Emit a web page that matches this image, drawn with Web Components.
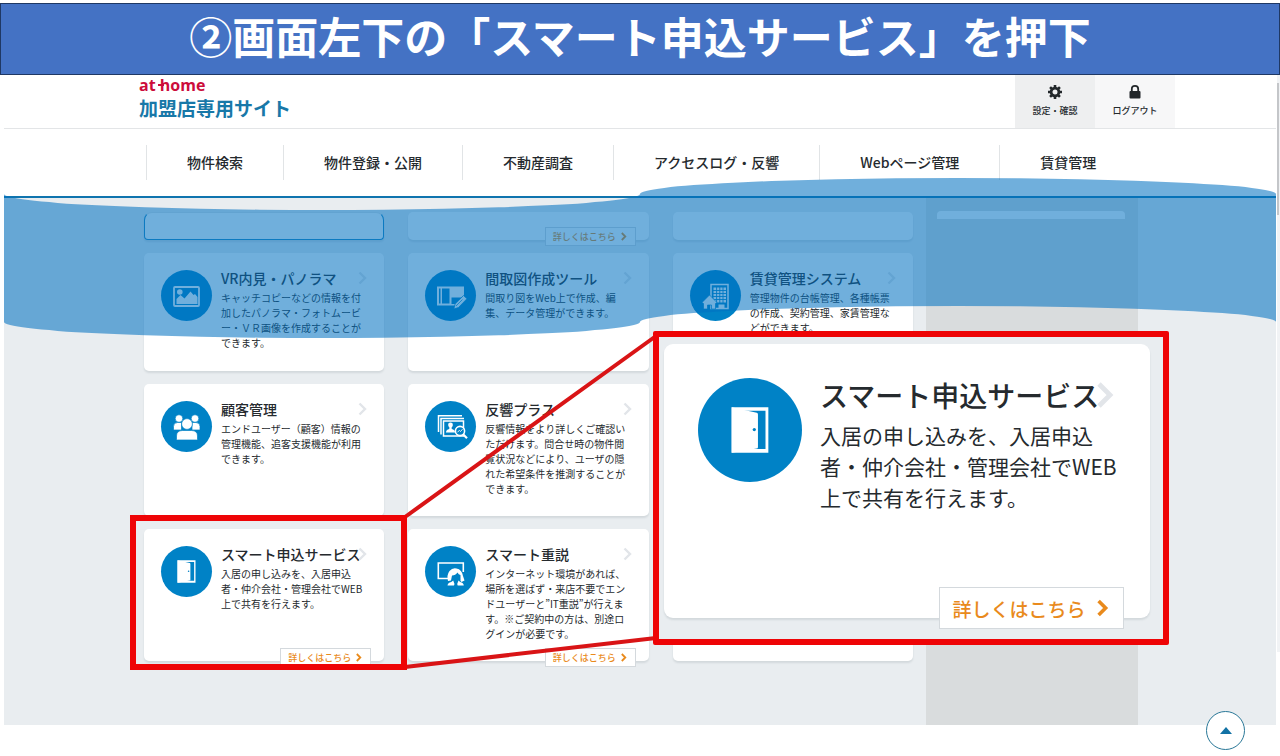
<!DOCTYPE html>
<html lang="ja">
<head>
<meta charset="utf-8">
<meta name="viewport" content="width=device-width, initial-scale=1">
<title>加盟店専用サイト</title>
<style>
  body { margin: 0; background: #fff; color: #252a2e; font-family: "Noto Sans CJK JP", "Noto Sans", sans-serif; }
</style>
</head>
<body>
<guide-page></guide-page>
<script>
const ICONS = {
  image: `<rect x="13" y="17" width="25" height="19" rx="1" fill="none" stroke="#fff" stroke-width="1.800"/>
    <circle cx="18.8" cy="22" r="2.8" fill="#fff"/>
    <path d="M15.500 34v-5l4-4 4 3.500 6-7 3 3.500 1.500-1 2.500 3v7z" fill="#fff"/>`,
  plan: `<path d="M12 16.500h27v10l-8 9H12z" fill="#fff"/>
    <path d="M14 18.500h1.500v15H14zM17 18.500h7.500v15H17zM26.500 27.500h11L30 34h-3.500z" fill="#0082c6"/>
    <path d="M38.500 25.500l3.500 3.200-8.500 8.800-4.700 1.500 1.300-5z" fill="#fff" stroke="#0082c6" stroke-width=".8"/>
    <path d="M31 36l6.500-6.500" stroke="#0082c6" stroke-width=".7"/>`,
  building: `<path d="M21 14.500h17v24H21z" fill="none" stroke="#fff" stroke-width="1.500"/>
    <path d="M23.500 17.500h12.500v15H23.500z" fill="#fff"/>
    <path d="M26.600 17v16M29.800 17v16M33 17v16M23 20.500h13.500M23 23.500h13.500M23 26.500h13.500M23 29.500h13.500" stroke="#0082c6" stroke-width=".9"/>
    <path d="M12 32.500l7.500-7.500 7.500 7.500-1.500 1v5.500h-4v-4h-4v4h-4v-5.500z" fill="#fff" stroke="#0082c6" stroke-width=".7"/>
    <path d="M28.500 34.500h6V39h-6z" fill="#fff"/>`,
  people: `<g fill="#fff" stroke="#0082c6" stroke-width=".7">
    <circle cx="18" cy="17.500" r="3.800"/><circle cx="34" cy="17.500" r="3.800"/>
    <path d="M12.500 29v-3.500q0-4 4-4h4v7.500zM39 29v-3.500q0-4-4-4h-4v7.500z"/>
    <path d="M15.500 38.500v-3.500q0-5.500 6-5.500h9q6 0 6 5.500v3.500q0 .5-1 .5h-19q-1 0-1-.5z"/>
    <circle cx="26" cy="23" r="5.400"/></g>`,
  search: `<g fill="none" stroke="#fff" stroke-width="1.500"><path d="M13.500 31V14.800H37M16 33.500V17.500H39"/>
    <path d="M18.500 20h20v15h-20z"/></g><circle cx="25.500" cy="24" r="2.400" fill="#fff"/>
    <path d="M21 31.500q0-3 3.300-3.600V26h2.400v1.900q3.300.6 3.300 3.600z" fill="#fff"/>
    <circle cx="35" cy="30" r="4.600" fill="#0082c6" stroke="#fff" stroke-width="1.600"/>
    <path d="M38.300 33.500l3.700 3.700" stroke="#fff" stroke-width="2.200"/>
    <path d="M32.500 31l2-1.500 1 1 2-2.300" stroke="#fff" stroke-width=".9" fill="none"/>`,
  door: `<path d="M16.500 14.300h18v22.400h-18z" fill="#fff"/>
    <path d="M21 16h12.100v18.800H20.500z" fill="#0082c6"/>
    <path d="M16.500 14.300l12.300 2.800q.6.200.6.800v16q0 .6-.6.700l-12.300 2.100z" fill="#fff"/>
    <circle cx="27.600" cy="25.300" r=".8" fill="#0082c6"/>`,
  lesson: `<path d="M23 32.500H13.300V17h25v9" fill="none" stroke="#fff" stroke-width="1.600"/>
    <path d="M23 35q-1.500-6 1.500-10 3-3.500 7-2.500 5.500 1 6.500 7.500l1.500 4.500-3 1.500-1-1V29q-2-.5-3-2.500-2 3-5.500 3l-1 5z" fill="#fff"/>
    <path d="M22.500 39.500q.3-3 3.700-3.500l2-1.500 1.300 3.500-.5 1.500zM38.800 39.500q-.3-3-3.600-3.500l-1.700-1.500-1.300 3.500.5 1.500z" fill="#fff"/>`
};

function define(name, html, setup) {
  const tpl = document.createElement("template");
  tpl.innerHTML = html;
  customElements.define(name, class extends HTMLElement {
    constructor() {
      super();
      this.attachShadow({ mode: "open" }).append(tpl.content.cloneNode(true));
    }
    connectedCallback() { if (setup) setup(this, this.shadowRoot); }
  });
}

define("guide-banner", `
  <style>
    :host { display: block; background: #4472c4; border: 1px solid #1f3864; color: #fff; padding-bottom: 8px; }
    h1 { margin: 0; font-size: 43px; line-height: 62px; font-weight: 700; text-align: center; white-space: nowrap; }
  </style>
  <h1><slot></slot></h1>`);

define("header-button", `
  <style>
    :host { display: flex; width: 80px; background: #f7f7f8; }
    :host([active]) { background: #eeeff0; }
    button { flex: 1; display: flex; flex-direction: column; align-items: center; gap: 4px; border: 0; padding: 9px 0 0;
      background: none; font: 500 9px/14px "Noto Sans CJK JP", sans-serif; color: #252a2e; }
    ::slotted(svg) { width: 16px; height: 16px; }
  </style>
  <button type="button"><slot name="icon"></slot><span><slot></slot></span></button>`);

define("site-header", `
  <style>
    :host { display: flex; justify-content: space-between; height: 53px; padding: 0 101px 0 135px; border-bottom: 1px solid #e3e5e7; background: #fff; }
    a { text-decoration: none; color: #1878a8; display: block; }
    .logo { display: block; color: #cc0c3b; font: 700 16px/20px "Open Sans", sans-serif; white-space: nowrap; }
    .logo span { position: relative; }
    .logo span::before { content: ""; position: absolute; left: -2px; top: 10px; width: 6px; height: 2px; background: currentColor; }
    .name { display: block; font-size: 19px; line-height: 26px; font-weight: 700; }
    .tools { display: flex; }
  </style>
  <a href="#"><span class="logo">at <span>home</span></span><span class="name">加盟店専用サイト</span></a>
  <div class="tools">
    <header-button active><svg slot="icon" viewBox="0 0 16 16"><g fill="#22272a"><path d="M6.700 1h2.600v3H6.700zM6.700 12h2.600v3H6.700zM1 6.700h3v2.600H1zM12 6.700h3v2.600h-3z"/><path d="M6.700 1h2.600v3H6.700zM6.700 12h2.600v3H6.700zM1 6.700h3v2.600H1zM12 6.700h3v2.600h-3z" transform="rotate(45 8 8)"/></g><circle cx="8" cy="8" r="3.900" fill="none" stroke="#22272a" stroke-width="2.800"/></svg>設定・確認</header-button>
    <header-button><svg slot="icon" viewBox="0 0 16 16"><rect x="2.500" y="7" width="11" height="7.500" rx="1" fill="#22272a"/><path d="M4.800 7.500V5q0-3.200 3.200-3.200T11.200 5v2.500" fill="none" stroke="#22272a" stroke-width="1.800"/></svg>ログアウト</header-button>
  </div>`);

define("site-nav", `
  <style>
    :host { display: block; background: #fff; border-bottom: 2px solid #0f74ae; padding: 16px 0 16px 142px; }
    nav { display: flex; }
    a { border-left: 1px solid #e1e4e6; padding: 0 40px; font-size: 14px; line-height: 35px; font-weight: 500; color: #252a2e; text-decoration: none; white-space: nowrap; }
  </style>
  <nav><a href="#">物件検索</a><a href="#">物件登録・公開</a><a href="#">不動産調査</a><a href="#">アクセスログ・反響</a><a href="#">Webページ管理</a><a href="#">賃貸管理</a></nav>`);

define("feature-card", `
  <style>
    :host { --disc: 51px; --pad: 17px; --gap: 9px; --title: 14px; --title-line: 20px; --text: 10px; --text-line: 15px; --lift: -2px; --space: 2px;
      --tag: 9px; --tag-w: 91px; --tag-h: 19px; --tag-right: 13px; --tag-drop: -6px; --chev: 14px; --chev-top: 18px; --chev-right: 15px; --tag-gap: 3px; --chev-s: 9px;
      display: block; position: relative; box-sizing: border-box; background: #fff; border-radius: 5px; box-shadow: 0 2px 2px rgba(60,70,80,.12); }
    :host([large]) { --disc: 104px; --pad: 34px; --gap: 18px; --title: 28px; --title-line: 40px; --text: 21px; --text-line: 31px; --lift: -3px; --space: 5px;
      --tag: 19px; --tag-w: 185px; --tag-h: 42px; --tag-right: 26px; --tag-drop: -11px; --chev: 28px; --chev-top: 37px; --chev-right: 32px; --tag-gap: 7px; --chev-s: 18px; border-radius: 9px; }
    :host([outlined]) { border: 1px solid #1c86c2; border-top-color: #dfe3e6; border-radius: 8px 8px 4px 4px; }
    .body { display: flex; gap: var(--gap); padding: var(--pad) 0 0 var(--pad); }
    .disc { flex: none; width: var(--disc); height: var(--disc); border-radius: 50%; background: #0082c6; display: block; }
    h2 { margin: var(--lift) 0 0; font-size: var(--title); line-height: var(--title-line); font-weight: 500; white-space: nowrap; }
    p { margin: var(--space) 0 0; font-size: var(--text); line-height: var(--text-line); white-space: nowrap; }
    .chev { position: absolute; top: var(--chev-top); right: var(--chev-right); width: var(--chev); height: var(--chev); }
    .more { position: absolute; box-sizing: border-box; right: var(--tag-right); bottom: var(--tag-drop); width: var(--tag-w); height: var(--tag-h);
      display: flex; align-items: center; justify-content: center; gap: var(--tag-gap); background: #fff; border: 1px solid #d4d9dd;
      color: #e98a1c; font-size: var(--tag); font-weight: 500; text-decoration: none; white-space: nowrap; }
    .more svg { width: var(--chev-s); height: var(--chev-s); }
    [hidden] { display: none; }
  </style>
  <div class="body"><svg class="disc" viewBox="0 0 51 51" aria-hidden="true"></svg><div><h2><slot name="title"></slot></h2><p><slot></slot></p></div></div>
  <svg class="chev" viewBox="0 0 14 14"><path d="M4.500 1.500L10 7l-5.500 5.500" fill="none" stroke="#e2e5e9" stroke-width="2.400"/></svg>
  <a class="more" href="#">詳しくはこちら<svg viewBox="0 0 9 9"><path d="M2.800 1L6.300 4.500 2.800 8" fill="none" stroke="#e98a1c" stroke-width="1.800"/></svg></a>`,
  (el, root) => {
    const icon = el.getAttribute("icon");
    root.querySelector(".disc").innerHTML = ICONS[icon] || "";
    root.querySelector(".body").hidden = !icon;
    root.querySelector(".chev").toggleAttribute("hidden", !icon);
    root.querySelector(".more").hidden = !el.hasAttribute("more");
  });

define("service-board", `
  <style>
    :host { display: flex; gap: 13px; background: #e9edf0; padding: 0 138px 0 140px; }
    .grid { flex: 1; display: grid; grid-template-columns: repeat(3, 1fr); grid-template-rows: 28px 118px 132px 132px; column-gap: 24px; row-gap: 13px; padding: 14px 0 64px; }
    aside { width: 212px; background: #d9dcdd; padding: 13px 13px 0 11px; box-sizing: border-box; }
    aside div { height: 8px; background: #fff; border-radius: 4px 4px 0 0; }
  </style>
  <div class="grid">
    <feature-card outlined></feature-card>
    <feature-card more></feature-card>
    <feature-card></feature-card>
    <feature-card icon="image"><span slot="title">VR内見・パノラマ</span>キャッチコピーなどの情報を付<br>加したパノラマ・フォトムービ<br>ー・ＶＲ画像を作成することが<br>できます。</feature-card>
    <feature-card icon="plan"><span slot="title">間取図作成ツール</span>間取り図をWeb上で作成、編<br>集、データ管理ができます。</feature-card>
    <feature-card icon="building"><span slot="title">賃貸管理システム</span>管理物件の台帳管理、各種帳票<br>の作成、契約管理、家賃管理な<br>どができます。</feature-card>
    <feature-card icon="people"><span slot="title">顧客管理</span>エンドユーザー（顧客）情報の<br>管理機能、追客支援機能が利用<br>できます。</feature-card>
    <feature-card icon="search"><span slot="title">反響プラス</span>反響情報をより詳しくご確認い<br>ただけます。問合せ時の物件閲<br>覧状況などにより、ユーザの隠<br>れた希望条件を推測することが<br>できます。</feature-card>
    <feature-card></feature-card>
    <feature-card icon="door" more><span slot="title">スマート申込サービス</span>入居の申し込みを、入居申込<br>者・仲介会社・管理会社でWEB<br>上で共有を行えます。</feature-card>
    <feature-card icon="lesson" more><span slot="title">スマート重説</span>インターネット環境があれば、<br>場所を選ばず・来店不要でエン<br>ドユーザーと”IT重説”が行えま<br>す。※ご契約中の方は、別途ロ<br>グインが必要です。</feature-card>
    <feature-card></feature-card>
  </div>
  <aside><div></div></aside>`);

define("wave-band", `
  <style>
    :host { display: block; position: absolute; left: 4px; right: 4px; top: 178px; height: 160px; pointer-events: none; }
    svg { display: block; width: 100%; height: 100%; }
  </style>
  <svg viewBox="0 0 1272 160" preserveAspectRatio="none"><path d="M0 16A318 16 0 0 0 636 16A318 16 0 0 1 1272 16V144A318 16 0 0 0 636 144A318 16 0 0 1 0 144Z" fill="#0070c0" fill-opacity=".56"/></svg>`);

define("zoom-callout", `
  <style>
    :host { display: block; pointer-events: none; }
    .lines { position: absolute; left: 0; top: 0; width: 1280px; height: 756px; }
    .panel { position: absolute; left: 653px; top: 331px; box-sizing: border-box; width: 516px; height: 314px; border: 6px solid #ee0406; border-radius: 2px; background: #e9edf0; padding: 7px 13px 21px 5px; display: flex; pointer-events: auto; }
    .panel ::slotted(*) { flex: 1; }
  </style>
  <svg class="lines" viewBox="0 0 1280 756"><path d="M405 517L656 336M405 667L656 638" stroke="#d91416" stroke-width="4" fill="none"/><rect x="133" y="518" width="271" height="149" fill="none" stroke="#ee0406" stroke-width="6"/></svg>
  <div class="panel"><slot></slot></div>`);

define("top-button", `
  <style>
    :host { display: block; position: absolute; right: 35px; top: 711px; }
    button { width: 39px; height: 39px; border-radius: 50%; border: 1px solid #2a7898; background: #fff; padding: 0; display: flex; align-items: center; justify-content: center; }
    svg { width: 12px; height: 7px; }
  </style>
  <button type="button" aria-label="ページの先頭へ"><svg viewBox="0 0 12 7"><path d="M0 7L6 0l6 7z" fill="#1272a5"/></svg></button>`);

define("guide-page", `
  <style>
    :host { display: block; position: relative; min-height: 100vh; padding-top: 3px; box-sizing: border-box; }
    .site { margin: 0 4px; }
    .rail { position: absolute; right: 0; top: 75px; width: 3px; height: 577px; background: #f1f3f5; padding-top: 8px; box-sizing: border-box; }
    .rail div { width: 2px; height: 132px; background: #c4c6c9; }
  </style>
  <guide-banner>②画面左下の「スマート申込サービス」を押下</guide-banner>
  <div class="site"><site-header></site-header><site-nav></site-nav><service-board></service-board></div>
  <div class="rail"><div></div></div>
  <wave-band></wave-band>
  <zoom-callout><feature-card large icon="door" more><span slot="title">スマート申込サービス</span>入居の申し込みを、入居申込<br>者・仲介会社・管理会社でWEB<br>上で共有を行えます。</feature-card></zoom-callout>
  <top-button></top-button>`);
</script>
</body>
</html>
